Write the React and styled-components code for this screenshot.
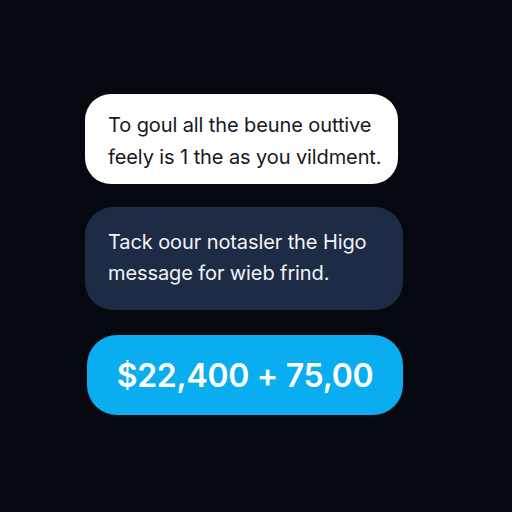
import React from 'react';
import styled, { createGlobalStyle } from 'styled-components';

const GlobalStyle = createGlobalStyle`
  html, body {
    margin: 0;
    padding: 0;
    background: #060810;
  }
`

const Screen = styled.div`
  width: 512px;
  height: 512px;
  background: #060810;
  display: flex;
  flex-direction: column;
  padding: 94px 0 0 85px;
  box-sizing: border-box;
  font-family: Inter, "Liberation Sans", sans-serif;
`

const Bubble = styled.div`
  box-sizing: border-box;
  width: ${p => p.w}px;
  height: ${p => p.h}px;
  margin-bottom: ${p => p.gap || 0}px;
  margin-left: ${p => p.offset || 0}px;
  border-radius: ${p => p.radius}px;
  background: ${p => p.bg};
  color: ${p => p.fg};
  display: flex;
  flex-direction: column;
  justify-content: center;
`

const Message = styled.p`
  margin: 0;
  padding-left: 23px;
  padding-top: ${p => p.drop || 0}px;
  padding-bottom: ${p => p.lift || 0}px;
  font-size: 20px;
  line-height: ${p => p.lh}px;
  font-weight: 400;
  letter-spacing: -0.1px;
`

const Amount = styled.div`
  text-align: center;
  font-size: 32px;
  font-weight: 600;
  letter-spacing: -0.3px;
  color: #ffffff;
`

function App() {
  return (
    <Screen>
      <GlobalStyle />

      <Bubble w={313} h={90} radius={26} bg="#ffffff" fg="#16181d" gap={23}>
        <Message lh={32} drop={4}>
          To goul all the beune outtive<br />
          feely is 1 the as you vildment.
        </Message>
      </Bubble>

      <Bubble w={318} h={103} radius={28} bg="#1d2b45" fg="#f2f4f8" gap={25}>
        <Message lh={31} lift={2}>
          Tack oour notasler the Higo<br />
          message for wieb frind.
        </Message>
      </Bubble>

      <Bubble w={316} h={80} radius={30} bg="#0aaef0" fg="#ffffff" offset={2}>
        <Amount>$22,400 + 75,00</Amount>
      </Bubble>
    </Screen>
  );
}

export default App;
